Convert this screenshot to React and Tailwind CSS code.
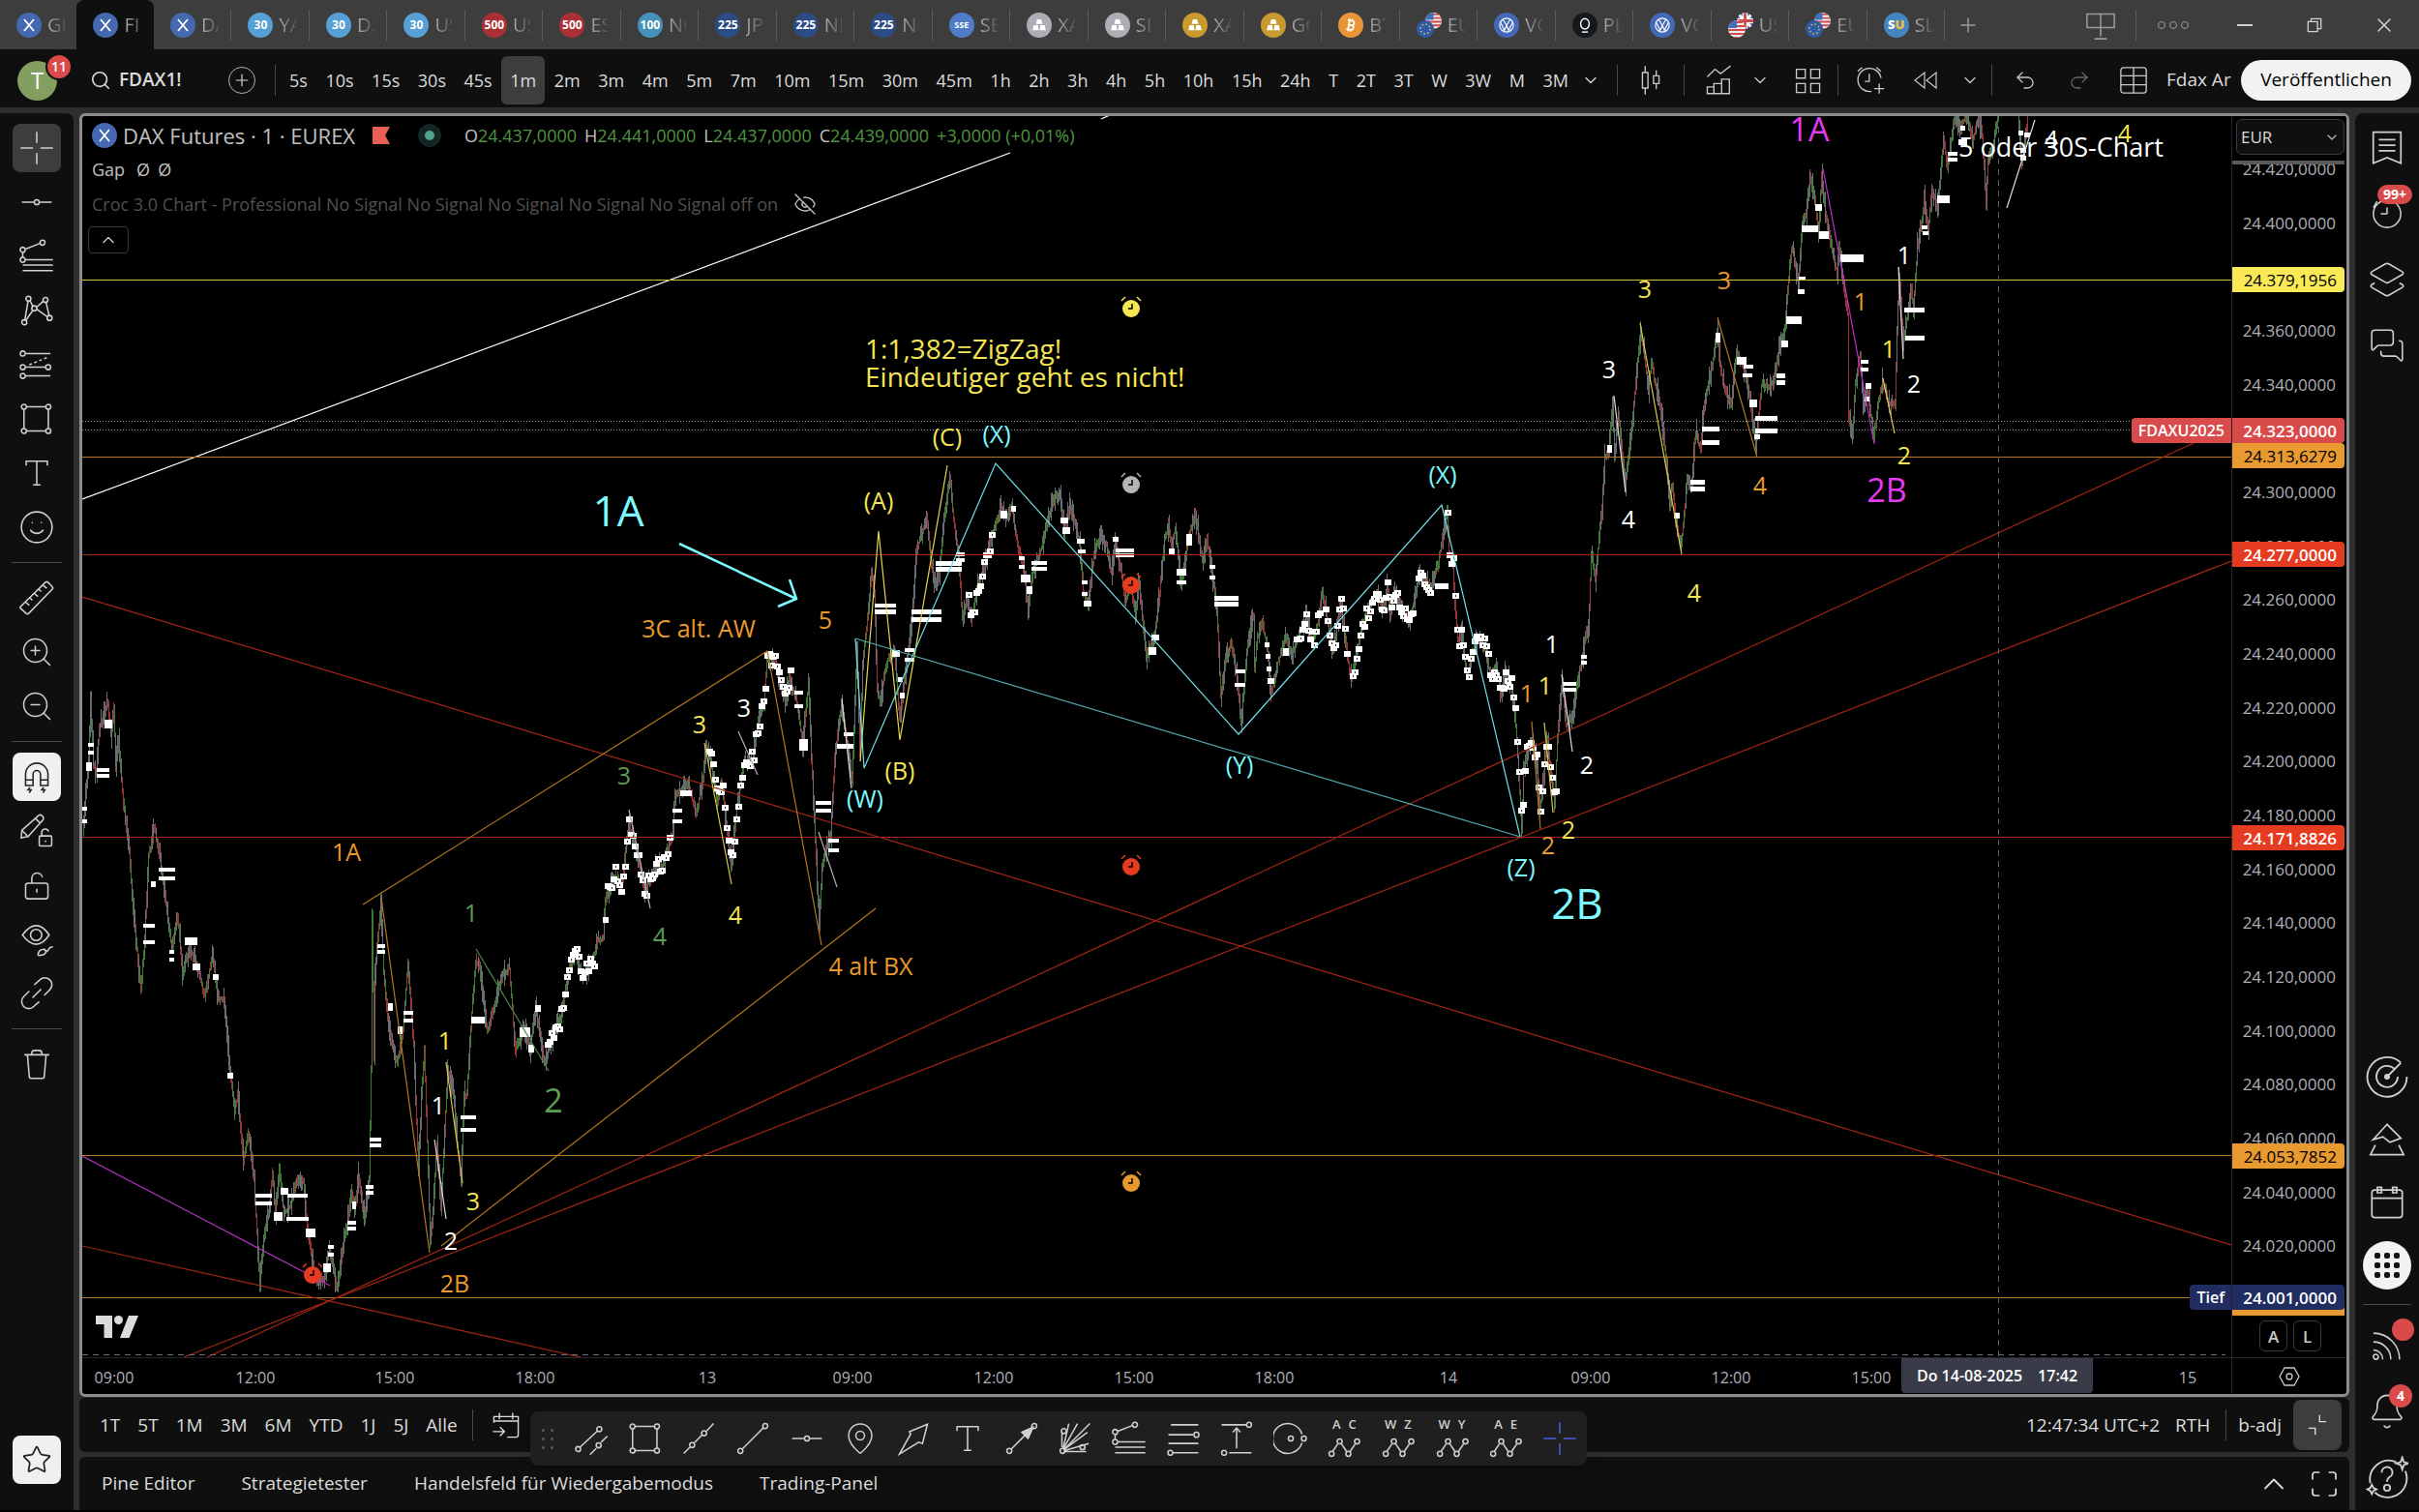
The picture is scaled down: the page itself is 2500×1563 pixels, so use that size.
import {
  Bitcoin, ChevronDown, ChevronUp, EyeOff, MapPin, Maximize, MessagesSquare, Plus, Search, Smile, Star, X,
  ZoomIn, ZoomOut, Layers2, Bell, Undo2, Redo2,
} from "lucide-react";

// Pixel window of the plot, all chart data below uses this space
const PLOT = { x: 85, y: 120, w: 2221, h: 1283 };
const left = (x) => `${((x - PLOT.x) / PLOT.w) * 100}%`;
const top = (y) => `${((y - PLOT.y) / PLOT.h) * 100}%`;

const C = {
  white: "#ffffff",
  yellow: "#f5e553",
  orange: "#e8992e",
  green: "#5a9e50",
  cyan: "#7df9ff",
  magenta: "#e33af0",
  red: "#e53b20",
};

const TABS = [
  ["eurex", "GI"], ["eurex", "FI"], ["eurex", "DA"], ["30", "YA"], ["30", "D."], ["30", "US"], ["500", "US"],
  ["500", "ES"], ["100", "NQ"], ["225", "JP"], ["225", "NI"], ["225", "NI"], ["sse", "SE"], ["silver", "XA"],
  ["silver", "SI"], ["gold", "XA"], ["gold", "GC"], ["btc", "BT"], ["eu", "EU"], ["vw", "VO"], ["pl", "PL"],
  ["vw", "VO"], ["gb", "US"], ["eu", "EU"], ["su", "SL"],
];

const TAB_COLORS = {
  eurex: "bg-[#4469b0]",
  30: "bg-[#55a0d4]",
  500: "bg-[#aa3035]",
  100: "bg-[#4592b8]",
  225: "bg-[#2d4b85]",
  sse: "bg-[#4f7cc9]",
  silver: "bg-[#adadb5]",
  gold: "bg-[#c99a2e]",
  btc: "bg-[#e79536]",
  vw: "bg-[#4469b8]",
  pl: "bg-[#15181c]",
  su: "bg-[#4585c0]",
};

const INTERVALS = [
  "5s", "10s", "15s", "30s", "45s", "1m", "2m", "3m", "4m", "5m", "7m", "10m", "15m", "30m", "45m", "1h", "2h",
  "3h", "4h", "5h", "10h", "15h", "24h", "T", "2T", "3T", "W", "3W", "M", "3M",
];

const RANGES = ["1T", "5T", "1M", "3M", "6M", "YTD", "1J", "5J", "Alle"];

const PRICE = [
  [86, 860], [92, 785], [94, 726], [97, 788], [100, 802], [103, 752], [112, 724], [115, 761], [118, 730], [120, 790],
  [123, 765], [128, 830], [134, 880], [138, 940], [146, 1025], [150, 970], [154, 885], [160, 855], [167, 895],
  [172, 935], [178, 980], [184, 945], [189, 1005], [196, 980], [205, 1000], [212, 1030], [220, 985], [225, 1030],
  [232, 1035], [238, 1105], [243, 1150], [246, 1130], [252, 1200], [257, 1170], [263, 1220], [269, 1328], [273, 1280],
  [279, 1245], [282, 1210], [285, 1255], [289, 1208], [294, 1255], [301, 1245], [307, 1220], [314, 1222], [318, 1270],
  [324, 1310], [328, 1322], [335, 1322], [341, 1290], [349, 1334], [353, 1300], [359, 1265], [364, 1230], [367, 1250],
  [371, 1215], [377, 1260], [382, 1220], [384, 1105], [385, 945], [387, 1095], [388, 1005], [394, 932], [397, 1005],
  [402, 1060], [411, 1100], [417, 1065], [422, 995], [428, 1080], [433, 1210], [436, 1130], [439, 1085], [442, 1180],
  [445, 1285], [448, 1250], [452, 1180], [456, 1250], [460, 1170], [463, 1108], [469, 1130], [473, 1180], [477, 1218],
  [480, 1130], [483, 1130], [487, 1060], [492, 992], [496, 1000], [504, 1065], [511, 1040], [518, 1010], [527, 1000],
  [533, 1085], [542, 1060], [548, 1085], [554, 1040], [563, 1098], [574, 1065], [580, 1050], [589, 1000], [596, 988],
  [603, 1010], [614, 990], [618, 970], [624, 970], [626, 930], [636, 905], [643, 915], [650, 850], [658, 880],
  [667, 920], [678, 895], [685, 895], [696, 860], [698, 822], [711, 808], [720, 842], [727, 803], [730, 772],
  [735, 787], [742, 829], [746, 806], [751, 852], [756, 895], [762, 833], [769, 787], [778, 784], [784, 745],
  [790, 730], [793, 678], [801, 684], [806, 703], [812, 726], [816, 698], [825, 730], [830, 770], [836, 705],
  [839, 784], [842, 845], [847, 958], [850, 898], [854, 879], [859, 864], [863, 784], [870, 728], [875, 764],
  [881, 806], [886, 668], [889, 780], [892, 688], [898, 627], [901, 592], [904, 611], [907, 711], [910, 724],
  [917, 684], [925, 673], [930, 742], [936, 695], [942, 650], [944, 623], [948, 565], [953, 554], [958, 535],
  [962, 573], [966, 605], [971, 592], [975, 546], [982, 490], [986, 539], [991, 573], [995, 640], [1000, 619],
  [1004, 640], [1011, 604], [1017, 588], [1024, 558], [1035, 525], [1040, 535], [1046, 522], [1052, 565],
  [1058, 585], [1063, 628], [1068, 588], [1075, 573], [1084, 535], [1089, 515], [1096, 512], [1100, 550],
  [1106, 523], [1116, 558], [1120, 611], [1125, 625], [1131, 573], [1137, 554], [1144, 565], [1149, 592],
  [1153, 560], [1159, 588], [1163, 622], [1169, 604], [1174, 638], [1177, 596], [1181, 638], [1185, 678],
  [1194, 657], [1199, 611], [1204, 558], [1208, 542], [1211, 569], [1215, 545], [1221, 605], [1229, 554],
  [1236, 532], [1243, 580], [1248, 558], [1254, 600], [1258, 627], [1262, 720], [1267, 680], [1273, 665],
  [1279, 700], [1283, 748], [1290, 663], [1296, 636], [1297, 690], [1300, 659], [1305, 641], [1310, 670],
  [1314, 718], [1321, 684], [1330, 656], [1335, 677], [1340, 663], [1350, 638], [1357, 663], [1363, 641],
  [1367, 610], [1372, 641], [1378, 674], [1386, 622], [1392, 670], [1397, 704], [1403, 670], [1407, 652],
  [1415, 627], [1422, 613], [1430, 627], [1434, 604], [1437, 636], [1442, 608], [1447, 624], [1456, 641],
  [1462, 624], [1467, 590], [1472, 599], [1480, 606], [1484, 588], [1487, 581], [1491, 556], [1496, 528],
  [1498, 570], [1502, 584], [1504, 624], [1507, 663], [1511, 649], [1514, 681], [1517, 699], [1522, 674],
  [1528, 659], [1535, 670], [1541, 699], [1547, 691], [1552, 718], [1555, 695], [1562, 706], [1567, 749],
  [1570, 799], [1573, 860], [1575, 795], [1579, 774], [1585, 768], [1589, 795], [1592, 838], [1596, 799],
  [1599, 762], [1603, 795], [1607, 832], [1610, 763], [1615, 704], [1619, 750], [1623, 741], [1626, 745],
  [1630, 709], [1636, 677], [1640, 649], [1642, 656], [1645, 570], [1649, 599], [1653, 556], [1656, 524],
  [1659, 470], [1663, 467], [1667, 416], [1669, 470], [1673, 428], [1680, 500], [1685, 460], [1690, 406],
  [1696, 342], [1699, 360], [1704, 403], [1707, 376], [1715, 413], [1720, 449], [1726, 521], [1729, 502],
  [1732, 538], [1738, 564], [1742, 521], [1744, 494], [1748, 506], [1753, 446], [1758, 465], [1761, 424],
  [1766, 396], [1771, 371], [1775, 342], [1778, 378], [1783, 403], [1790, 417], [1795, 364], [1802, 378],
  [1808, 406], [1815, 458], [1821, 399], [1833, 396], [1839, 360], [1845, 342], [1850, 271], [1853, 255],
  [1859, 294], [1863, 231], [1867, 221], [1871, 184], [1876, 206], [1880, 243], [1883, 180], [1888, 228],
  [1895, 264], [1899, 282], [1901, 253], [1906, 296], [1910, 324], [1911, 431], [1915, 450], [1918, 396],
  [1923, 364], [1926, 418], [1930, 403], [1937, 450], [1942, 414], [1946, 394], [1952, 414], [1959, 419],
  [1961, 342], [1963, 284], [1965, 310], [1967, 356], [1972, 324], [1976, 296], [1978, 322], [1982, 253],
  [1987, 228], [1989, 202], [1993, 240], [1997, 196], [2003, 214], [2007, 167], [2009, 142], [2013, 174],
  [2017, 146], [2020, 121], [2027, 131], [2033, 117], [2039, 146], [2045, 121], [2049, 139], [2053, 210],
  [2055, 164], [2059, 156], [2065, 121],
];
const PRICE_LAST = [[2086, 121], [2090, 170], [2096, 124]];

// Gap boxes: x, y, width, height
const GAPS = [
  [91, 768, 6, 4], [91, 776, 6, 4], [89, 788, 6, 9], [108, 744, 8, 9], [100, 794, 13, 4], [100, 800, 13, 4],
  [85, 834, 5, 4], [85, 847, 5, 4], [164, 897, 17, 4], [164, 906, 17, 4], [148, 955, 12, 4], [148, 972, 12, 4],
  [191, 969, 13, 8], [199, 996, 8, 7], [235, 1109, 6, 6], [220, 1007, 6, 6], [156, 911, 5, 6], [175, 982, 5, 4],
  [175, 990, 5, 4], [264, 1234, 17, 4], [264, 1242, 17, 4], [290, 1228, 8, 7], [283, 1253, 9, 9], [297, 1234, 21, 4],
  [296, 1258, 23, 4], [316, 1270, 10, 9], [334, 1306, 8, 9], [339, 1287, 6, 4], [339, 1295, 6, 4], [359, 1262, 9, 4],
  [359, 1268, 9, 4], [364, 1242, 4, 8], [378, 1225, 8, 4], [378, 1231, 8, 4], [382, 1176, 12, 4], [382, 1182, 12, 4],
  [390, 976, 8, 4], [390, 982, 8, 4], [401, 1037, 5, 8], [411, 1061, 5, 8], [417, 1045, 10, 4], [417, 1053, 10, 4],
  [476, 1153, 16, 4], [476, 1166, 16, 4], [487, 1051, 14, 7], [537, 1062, 11, 10], [546, 1080, 6, 8],
  [553, 1039, 6, 7], [623, 948, 6, 6], [695, 836, 10, 4], [695, 847, 10, 4], [703, 817, 12, 6], [821, 714, 9, 4],
  [821, 728, 9, 4], [826, 764, 9, 12], [843, 828, 16, 4], [843, 836, 16, 4], [856, 867, 11, 4], [856, 877, 11, 4],
  [865, 769, 17, 5], [872, 757, 10, 4], [904, 624, 22, 4], [904, 630, 22, 5], [942, 630, 31, 5], [942, 638, 31, 5],
  [935, 670, 10, 4], [935, 680, 10, 4], [922, 672, 8, 7], [928, 700, 5, 5], [930, 716, 5, 6], [967, 580, 27, 5],
  [967, 586, 27, 5], [988, 571, 9, 4], [988, 577, 9, 4], [1066, 580, 16, 4], [1066, 586, 16, 4], [1055, 594, 10, 8],
  [1061, 606, 6, 8], [1053, 575, 6, 4], [1053, 584, 6, 4], [1034, 528, 7, 8], [1045, 523, 5, 6], [1153, 567, 19, 4],
  [1153, 572, 19, 4], [1150, 555, 6, 5], [1113, 557, 8, 5], [1114, 568, 8, 4], [1096, 535, 8, 6], [1098, 545, 8, 7],
  [1216, 588, 10, 7], [1216, 600, 10, 4], [1226, 552, 6, 12], [1208, 567, 6, 6], [1250, 584, 6, 4],
  [1250, 595, 6, 4], [1255, 616, 25, 5], [1255, 622, 25, 5], [1277, 692, 10, 4], [1276, 706, 11, 4],
  [1187, 669, 8, 8], [1190, 656, 8, 6], [1118, 600, 6, 4], [1118, 612, 6, 4], [1120, 621, 8, 6], [1307, 664, 5, 5],
  [1308, 676, 5, 5], [1309, 689, 5, 5], [1310, 701, 7, 6], [1326, 670, 6, 8], [1483, 603, 14, 6], [1615, 705, 14, 4],
  [1615, 711, 14, 4], [1634, 677, 6, 4], [1634, 683, 6, 4], [1759, 441, 18, 5], [1759, 455, 18, 5],
  [1747, 496, 15, 5], [1747, 503, 15, 5], [1814, 430, 23, 5], [1814, 443, 23, 5], [1836, 386, 9, 5],
  [1836, 393, 9, 5], [1841, 352, 7, 7], [1846, 327, 16, 8], [1859, 286, 7, 4], [1858, 299, 7, 5], [1862, 233, 17, 7],
  [1876, 211, 7, 7], [1880, 239, 10, 8], [1902, 263, 24, 8], [1923, 372, 8, 4], [1923, 380, 8, 4], [1795, 369, 10, 8],
  [1802, 377, 10, 4], [1801, 386, 10, 4], [1808, 413, 8, 8], [1968, 318, 21, 5], [1969, 347, 20, 5],
  [1986, 233, 6, 4], [1987, 239, 6, 4], [2002, 202, 13, 8], [2013, 157, 10, 4], [2013, 163, 10, 4], [2024, 144, 9, 6],
  [2026, 130, 5, 5], [2086, 135, 5, 5], [2092, 137, 6, 5], [2088, 153, 6, 5], [2088, 161, 6, 5], [1773, 344, 5, 10],
  [1928, 396, 6, 6], [1927, 410, 5, 5], [1661, 460, 5, 8], [1730, 530, 6, 6], [1813, 449, 6, 5],
];

const GAP_RANGES = [
  [566, 616], [628, 694], [733, 818], [1001, 1026], [1340, 1366], [1370, 1394], [1398, 1462], [1466, 1480], [1496, 1609],
];

const LINES = [
  [C.white, 1, "85,516 1044,158"], [C.white, 1, "1138,123 1147,119"],
  ["#cdbf3c", 1, "85,289.5 2306,289.5"],
  ["#b5771f", 1, "85,472.5 2306,472.5"], ["#a32614", 1, "85,573.5 2306,573.5"], ["#a32614", 1, "85,865.5 2306,865.5"],
  ["#b5771f", 1, "85,1194.5 2306,1194.5"], ["#b5771f", 1, "85,1341.5 2306,1341.5"],
  ["#a32614", 1, "85,617 2306,1287"], ["#a32614", 1, "85,1288 600,1403"],
  ["#a32614", 1, "214,1403 2306,440"], ["#a32614", 1, "190,1403 2306,580"],
  ["#b02fc0", 1, "85,1195 341,1329"],
  ["#b5771f", 1, "375,935 793,673 849,977"], ["#b5771f", 1, "394,928 444,1295"], ["#b5771f", 1, "456,1288 905,939"],
  ["#4a8a40", 1, "492,981 567,1107"], ["#d9ca45", 1, "461,1098 478,1223"], ["#dddddd", 1, "449,1178 461,1260"],
  ["#b0b0b0", 1, "650,837 672,939"], ["#d9ca45", 1, "728,768 756,914"], ["#b0b0b0", 1, "763,756 783,801"],
  ["#b0b0b0", 1, "846,860 865,917"], ["#dddddd", 1, "870,722 880,815"],
  ["#e6d74e", 1, "889,787 908,549 930,765 979,481"],
  ["#6fe0e6", 1, "884,660 893,794 1029,479 1280,759 1490,522 1571,865"], ["#4fa9ad", 1, "884,660 1571,865"],
  ["#7df9ff", 2, "702,562 823,619"], ["#7df9ff", 2, "816,599 823,619 804,627"],
  ["#b5771f", 1, "1583,746 1592,857"], ["#d9ca45", 1, "1596,747 1605,840"], ["#dddddd", 1, "1614,697 1625,777"],
  ["#dddddd", 1, "1668,409 1680,509"], ["#d9ca45", 1, "1695,334 1738,573"], ["#b5771f", 1, "1775,328 1816,473"],
  ["#c02fd0", 1, "1884,174 1937,459"], ["#e6d74e", 1, "1946,391 1958,448"], ["#dddddd", 1, "1962,276 1967,371"],
  ["#dddddd", 1, "2103,124 2074,215"],
];

const NOTES = [
  [358, 880, "1A", C.orange], [645, 801, "3", C.green], [487, 943, "1", C.green], [682, 967, "4", C.green],
  [572, 1137, "2", C.green, "md"], [460, 1075, "1", C.yellow], [453, 1142, "1", C.white], [489, 1241, "3", C.yellow],
  [466, 1282, "2", C.white], [470, 1326, "2B", C.orange], [639, 527, "1A", C.cyan, "lg"],
  [722, 649, "3C alt. AW", C.orange], [853, 640, "5", C.orange], [908, 517, "(A)", C.yellow],
  [979, 451, "(C)", C.yellow], [1030, 448, "(X)", C.cyan], [930, 796, "(B)", C.yellow], [894, 825, "(W)", C.cyan],
  [1281, 790, "(Y)", C.cyan], [723, 748, "3", C.yellow], [769, 731, "3", C.white], [760, 945, "4", C.yellow],
  [900, 998, "4 alt BX", C.orange], [1491, 490, "(X)", C.cyan], [1572, 896, "(Z)", C.cyan],
  [1630, 933, "2B", C.cyan, "lg"], [1578, 716, "1", C.orange], [1597, 708, "1", C.yellow], [1604, 665, "1", C.white],
  [1640, 790, "2", C.white], [1621, 857, "2", C.yellow], [1600, 873, "2", C.orange], [1683, 536, "4", C.white],
  [1751, 612, "4", C.yellow], [1819, 501, "4", C.orange], [1870, 133, "1A", C.magenta, "md"],
  [1950, 506, "2B", C.magenta, "md"], [1782, 289, "3", C.orange], [1700, 298, "3", C.yellow],
  [1663, 381, "3", C.white], [1923, 311, "1", C.orange], [1952, 360, "1", C.yellow], [1968, 263, "1", C.white],
  [1978, 396, "2", C.white], [1968, 470, "2", C.yellow], [2120, 143, "4", C.white], [2196, 137, "4", C.yellow],
  [2130, 151, "5 oder 30S-Chart", C.white, "note"],
];

const NOTE_SIZES = {
  sm: "text-[25px] font-medium",
  note: "text-[27px] font-medium",
  md: "text-[34px]",
  lg: "text-[44px]",
};

const ALARMS = [
  [1169, 318, C.yellow], [1169, 500, "#b5b5b5"], [1169, 604, C.red], [1169, 895, C.red], [1169, 1222, C.orange],
  [323, 1317, C.red],
];

const TIMES = [
  [118, "09:00"], [264, "12:00"], [408, "15:00"], [553, "18:00"], [731, "13"], [881, "09:00"], [1027, "12:00"],
  [1172, "15:00"], [1317, "18:00"], [1497, "14"], [1644, "09:00"], [1789, "12:00"], [1934, "15:00"], [2261, "15"],
];

const SCALE = Array.from({ length: 21 }, (_, i) => 24420 - i * 20).filter((p) => p !== 24380 && p !== 24320);
const priceY = (p) => 230 + (24400 - p) * 2.782;

const TAGS = [
  [289, "24.379,1956", "bg-[#f9ea55] text-black"],
  [471, "24.313,6279", "bg-[#e89a30] text-black"],
  [445, "24.323,0000", "bg-[#d94a4a] text-white font-semibold"],
  [573, "24.277,0000", "bg-[#e53b20] text-white font-semibold"],
  [866, "24.171,8826", "bg-[#e53b20] text-white font-semibold"],
  [1195, "24.053,7852", "bg-[#e89a30] text-black"],
];

// Small deterministic generator so the bars look the same on every render
function rng(seed) {
  let s = seed;
  return () => {
    s = (s * 16807) % 2147483647;
    return s / 2147483647;
  };
}

function buildBars(points, seed) {
  const rand = rng(seed);
  let wick = "";
  let up = "";
  let down = "";
  for (let i = 0; i < points.length - 1; i++) {
    const [x0, y0] = points[i];
    const [x1, y1] = points[i + 1];
    for (let x = x0; x < x1; x++) {
      const a = y0 + ((y1 - y0) * (x - x0)) / (x1 - x0);
      const b = y0 + ((y1 - y0) * (x + 1 - x0)) / (x1 - x0);
      const lo = Math.min(a, b);
      const hi = Math.max(a, b);
      if (rand() > 0.55) {
        wick += `M${x + 0.5} ${Math.round(lo - rand() * 14)}V${Math.round(hi + rand() * 14)}`;
      }
      const rising = rand() > 0.3 ? b < a : b >= a;
      const body = `M${x + 0.5} ${Math.round(lo - rand() * 7)}V${Math.round(hi + 1 + rand() * 7)}`;
      if (rising) up += body;
      else down += body;
    }
  }
  return { wick, up, down };
}

function priceAt(x) {
  const i = Math.max(0, PRICE.findIndex((p) => p[0] > x) - 1);
  const [x0, y0] = PRICE[i];
  const [x1, y1] = PRICE[i + 1];
  return y0 + ((y1 - y0) * (x - x0)) / (x1 - x0);
}

function buildSquares() {
  const rand = rng(77);
  const out = [];
  GAP_RANGES.forEach(([from, to]) => {
    for (let x = from; x < to; x += 2) {
      out.push([x - 3, Math.round(priceAt(x) - 3 + (rand() - 0.5) * 18), rand() > 0.4]);
    }
  });
  return out;
}

const BARS = [buildBars(PRICE, 4711), buildBars(PRICE_LAST, 99)];
const SQUARES = buildSquares();

// Line icons in a 28 unit box, dots are the little round handles
const ICONS = {
  cross: ["M14 1v9M14 18v9M1 14h10M17 14h10"],
  hline: ["M2 14h9.5M16.5 14H26", [[14, 14]]],
  fib: ["M4.8 8.2L16.5 3.6M2.7 10.7v4M4.8 16.8H27M2.7 21H27M2.7 25.5H27", [[2.7, 8.7], [2.7, 16.8], [18.6, 3]]],
  pattern: [
    "M4.4 21.5L7 6.5M8.6 6l2.2 4.5M14 11.3l5-4.6M14 13l8.4 6M21.5 7.5l2.4 10.5M10.8 14L5.3 21.8",
    [[7.3, 4.5], [21, 5.5], [12, 12.2], [4, 23.5], [24.3, 20]],
  ],
  position: ["M5 5h20M5 16h16M5 23h20M8 14l2-.8M12 12.4l2-.8M16 10.8l2-.8M20 9.2l2-.8", [[2.8, 5], [2.8, 16], [23.2, 16], [2.8, 23]]],
  rect: ["M6 4.3h15M6 23.7h15M3.7 6.5v15M23.3 6.5v15", [[3.7, 4.3], [23.3, 4.3], [3.7, 23.7], [23.3, 23.7]]],
  text: ["M5.5 8V4.5h17V8M14 4.5v19M11 23.5h6"],
  ruler: ["M1 21L21 1.5q1-.8 2 0l3.500 3.500q.8 1 0 2L7.500 26.500q-1 .8-2 0L1 22.500q-.6-.8 0-1.500M5 17.500l3 2.500M8.500 14l2 2M12 10.500l3 2.500M15.500 7l2 2M19 3.800l3 2.500"],
  magnet: ["M5 21v-9a9 9 0 0 1 18 0v9h-6v-9a3 3 0 0 0-6 0v9zM5 16.500h6M17 16.500h6M8.500 22.500l-1.500 2h2.500l-1.500 2.500M19.500 22.500l-1.500 2h2.500l-1.500 2.500"],
  penlock: ["M2 13.500L15.500 1.500q1.500-1 3 .5t.5 3L7 18.500l-5.500 1zM13 4l4 4M2.500 14l4 4M17 18h8a1 1 0 0 1 1 1v6a1 1 0 0 1-1 1h-8a1 1 0 0 1-1-1v-6a1 1 0 0 1 1-1M18 18v-3a2.800 2.800 0 0 1 5.500-.5M21 21.500v1.500"],
  lock: ["M7 12.500h14a2 2 0 0 1 2 2v8.500a2 2 0 0 1-2 2H7a2 2 0 0 1-2-2v-8.500a2 2 0 0 1 2-2M10 12.500V8.500a4.300 4.300 0 0 1 8.500-.8M14 17v3"],
  eye: ["M2.500 10.500Q8 3 13.500 3T24 10.500Q19 18 13.500 18T2.500 10.500zM15 27q0-5 5-5 2 1 1 3t-6 2M21.500 24q1 0 2-2t3.500-2"],
  link: ["M12 7l4.500-4a5.500 5.500 0 0 1 8 8L20 15.500M8 12l-4.500 4.500a5.500 5.500 0 0 0 8 8L16 20.500M10.500 17.500l7-7"],
  trash: ["M4 6.500h20M6.500 6.500l1.500 17.500a1.500 1.500 0 0 0 1.500 1.500h9a1.500 1.500 0 0 0 1.500-1.500l1.500-17.500M10 6.500V5a2 2 0 0 1 2-2h4a2 2 0 0 1 2 2v1.500"],
  channel: ["M5 21L19 8M13 27l5-5M22 17l5-5", [[3.5, 22.5], [20.5, 6.5], [20, 19.5]]],
  info: ["M2 26l5-5M10.5 17.5l6-6M20.5 8L26 2", [[8.8, 19.3], [18.4, 9.8]]],
  trend: ["M5.5 22.5l17-17", [[4, 24], [24, 4]]],
  arrow: ["M2 26.500l9-16-1-2L24.500 2.500l-4 15.500-3-1z"],
  arrowline: ["M5.5 22.5L18 10M22.5 5.5L14.5 9l4.5 4.5z", [[4, 24], [24, 4]]],
  fan: ["M5 23L26 2M4.5 22L9 2M3.5 21V9M5 23l19-14M5 24l20-6M5 24.5h18M4.8 22L16 2", [[4, 24], [20, 21], [5, 8]]],
  fibtime: ["M4 3h22M2 11h20M2 18h24M5.5 25.5H26", [[3.5, 25.5], [24.5, 11]]],
  measure: ["M2 3h20M8 25.5h18M14 6v16M11 9l3-3.5L17 9", [[24, 3], [4, 25.5]]],
  circle: ["M23 10.5A12 12 0 1 0 23 17.5", [[14, 14], [24.5, 14]]],
  zig: ["M5 22l4-6M12 16l4 6M19 22l4-6", [[4, 24], [10.5, 14], [17.5, 24], [24.5, 14]]],
  candles: ["M9 1v6M9 21v6M6.500 7h5v14h-5zM19 5v5M19 17v5M16.500 10h5v7h-5z"],
  indicators: ["M3 11l7-7 5 4 9-7M3 26v-6h6v6zM9 26v-9h7v9M16 26V13h7v13H3"],
  tiles: ["M4 4h8v8H4zM17 4h8v8h-8zM4 17h8v8H4zM17 17h8v8h-8z"],
  alert: ["M23.6 12A10.5 10.5 0 1 0 15 24M13 8v7H9M2.5 6l4-3.5M19.5 2.5l4 3.5M22 17v9M17.5 21.5h9"],
  replay: ["M13 6v16L3 14zM25 6v16L15 14z"],
  layout: ["M5 2.5h18A2.500 2.500 0 0 1 25.500 5v18A2.500 2.500 0 0 1 23 25.500H5A2.500 2.500 0 0 1 2.500 23V5A2.500 2.500 0 0 1 5 2.500zM2.500 10h23M2.500 18h23M14 2.500v23"],
  goto: ["M3 12V6.500h22V23a2 2 0 0 1-2 2h-8M3 10.500h22M8 3v6M20 3v6M2 20h10M8.500 16l4 4-4 4"],
  list: ["M4 2.500h20V25l-10-4-10 4zM8 8h12M8 12h12M8 16h12"],
  clock: ["M14 14V9M14 14h-5M3 9l3-5M25 14a11 11 0 1 1-22 0 11 11 0 0 1 22 0"],
  radar: ["M27 14a13 13 0 1 1-4-9.200M21 14a7 7 0 1 1-2-5M14 14l9-9"],
  cone: ["M14 3L4 14l7-2 5 4 8-3zM5.500 18L2 25h24l-3.500-7"],
  calendar: ["M5 5h18a2 2 0 0 1 2 2v16a2 2 0 0 1-2 2H5a2 2 0 0 1-2-2V7a2 2 0 0 1 2-2zM3 11h22M7 3h3v4H7zM18 3h3v4h-3z"],
  feed: ["M3 4a21 21 0 0 1 21 21M3 11a14 14 0 0 1 14 14M3 17.500a7.500 7.500 0 0 1 7.500 7.500", [[5, 23]]],
  help: ["M20 4A12.500 12.500 0 0 0 3 18M6 24a12.500 12.500 0 0 0 20-14M10.500 11a3.500 3.500 0 1 1 5 3c-1 .600-1.500 1.200-1.500 3M24 1l1 3 3 1-3 1-1 3-1-3-3-1 3-1zM4 19l1 2 2 1-2 1-1 2-1-2-2-1 2-1z", [[14, 21]]],
  corners: ["M16 5v6h6M6 17h6v6"],
  monitor: ["M3 5h22v11H3zM14 5v18M9 25h10"],
};

function Icon({ name, className = "size-9" }) {
  const [d, dots = []] = ICONS[name];
  return (
    <svg viewBox="0 0 28 28" className={className} fill="none" stroke="currentColor" strokeWidth="1.2">
      <path d={d} />
      {dots.map(([cx, cy]) => (
        <circle key={`${cx}-${cy}`} cx={cx} cy={cy} r="2" />
      ))}
      {name === "arrowline" && <path d="M23 5L14 9l5 5z" fill="currentColor" />}
      {name === "eye" && <circle cx="13.500" cy="10.500" r="4.500" />}
    </svg>
  );
}

function Flag({ kind, className }) {
  return (
    <svg viewBox="0 0 18 18" className={className}>
      <clipPath id={`flag-${kind}`}>
        <circle cx="9" cy="9" r="9" />
      </clipPath>
      <g clipPath={`url(#flag-${kind})`}>
        {kind === "us" && (
          <>
            <path fill="#eee" d="M0 0h18v18H0z" />
            <path stroke="#d04a4a" strokeWidth="2" d="M0 2h18M0 6h18M0 10h18M0 14h18M0 18h18" />
            <path fill="#3f6fc0" d="M0 0h9v8H0z" />
          </>
        )}
        {kind === "gb" && (
          <>
            <path fill="#3355a0" d="M0 0h18v18H0z" />
            <path stroke="#fff" strokeWidth="3" d="M0 0l18 18M18 0L0 18" />
            <path stroke="#fff" strokeWidth="6" d="M9 0v18M0 9h18" />
            <path stroke="#d04a4a" strokeWidth="3" d="M9 0v18M0 9h18" />
          </>
        )}
        {kind === "eu" && (
          <>
            <path fill="#2f5aa8" d="M0 0h18v18H0z" />
            <circle cx="9" cy="9" r="5" fill="none" stroke="#e8c640" strokeWidth="1.5" strokeDasharray="1.500 2.400" />
          </>
        )}
      </g>
    </svg>
  );
}

function EurexMark({ className }) {
  return (
    <svg viewBox="0 0 26 26" className={className}>
      <circle cx="13" cy="13" r="13" fill="#4469b0" />
      <path d="M8 7l10 12M18 7L8 19" stroke="#fff" strokeWidth="1.800" fill="none" />
    </svg>
  );
}

function TabLogo({ kind }) {
  if (kind === "eurex") return <EurexMark className="size-[26px] shrink-0" />;
  if (kind === "eu" || kind === "gb") {
    return (
      <span className="relative block size-[26px] shrink-0">
        <Flag kind={kind === "eu" ? "us" : "gb"} className="absolute right-0 top-0 size-[17px]" />
        <Flag kind={kind === "eu" ? "eu" : "us"} className="absolute bottom-0 left-0 size-[18px]" />
      </span>
    );
  }
  return (
    <span className={`flex size-[26px] shrink-0 items-center justify-center rounded-full text-white ${TAB_COLORS[kind]}`}>
      {(kind === "silver" || kind === "gold") && (
        <svg viewBox="0 0 18 14" className="h-3 w-4" fill="#fff">
          <path d="M6.500 0h5l1.500 5.500H5zM2.500 7h5l1 6H1zM10.500 7h5L17 13H9.500z" />
        </svg>
      )}
      {kind === "btc" && <Bitcoin className="size-4" strokeWidth={2.5} />}
      {kind === "vw" && (
        <svg viewBox="0 0 18 18" className="size-4" fill="none" stroke="#fff" strokeWidth="1.300">
          <circle cx="9" cy="9" r="8" />
          <path d="M5 2.500l4 7 4-7M2 6l4.500 9L9 9.500 11.500 15 16 6" />
        </svg>
      )}
      {kind === "pl" && (
        <svg viewBox="0 0 18 18" className="size-4" fill="none" stroke="#fff" strokeWidth="1.600">
          <ellipse cx="9" cy="7.500" rx="5" ry="6" />
          <path d="M5.500 17h7" />
        </svg>
      )}
      {kind === "su" && <span className="text-[13px] font-extrabold">S<span className="text-[#f0c040]">U</span></span>}
      {kind === "sse" && <span className="text-[9px] font-bold">SSE</span>}
      {/^\d+$/.test(kind) && <span className="text-[12px] font-bold leading-none">{kind}</span>}
    </span>
  );
}

function TabBar() {
  return (
    <header className="flex h-[51px] shrink-0 items-center bg-[#3d3d3d] text-[#9a9a9a]">
      <nav className="flex h-full w-[80.4%] items-center">
        {TABS.map(([kind, label], i) => (
          <a
            key={i}
            href="#chart"
            className={`flex min-w-0 flex-1 items-center pl-[17px] ${
              i === 1 ? "h-full rounded-t-lg bg-[#0f0f0f]" : "h-8"
            } ${i > 1 ? "border-r border-[#5c5c5c]" : ""}`}
          >
            <TabLogo kind={kind} />
            <span className="ml-1.5 w-[18px] overflow-hidden bg-gradient-to-r from-[#b0b0b0] to-[#505050] bg-clip-text text-xl text-transparent">
              {label}
            </span>
          </a>
        ))}
      </nav>
      <button aria-label="Neuer Tab" className="ml-3"><Plus className="size-6" strokeWidth={1.500} /></button>
      <div className="ml-auto flex h-full items-center">
        <button aria-label="Monitor" className="flex w-[72px] justify-center"><Icon name="monitor" /></button>
        <span className="h-8 w-px bg-[#5c5c5c]" />
        <button aria-label="Mehr" className="flex w-[76px] justify-center gap-1">
          <span className="size-2 rounded-full border border-[#9a9a9a]" />
          <span className="size-2 rounded-full border border-[#9a9a9a]" />
          <span className="size-2 rounded-full border border-[#9a9a9a]" />
        </button>
        <button aria-label="Minimieren" className="flex w-[72px] justify-center"><span className="h-0.5 w-4 bg-[#d0d0d0]" /></button>
        <button aria-label="Verkleinern" className="flex w-[72px] justify-center">
          <svg viewBox="0 0 18 18" className="size-4" fill="none" stroke="#d0d0d0" strokeWidth="1.500">
            <path d="M1.500 5h11v11.500h-11zM5 5V1.500h11.500V13H13" />
          </svg>
        </button>
        <button aria-label="Schließen" className="flex w-[72px] justify-center text-[#d0d0d0]"><X className="size-6" strokeWidth={1.500} /></button>
      </div>
    </header>
  );
}

function Divider() {
  return <span className="h-8 w-px shrink-0 bg-[#4a4a4a]" />;
}

function TopToolbar() {
  return (
    <div className="flex h-[60px] shrink-0 items-center overflow-hidden bg-[#0f0f0f] pt-1 text-lg font-medium text-[#dbdbdb]">
      <button aria-label="Konto" className="relative ml-[18px] size-[41px] shrink-0 rounded-full bg-[#839f5f] text-2xl text-white">
        T
        <span className="absolute -right-4 -top-2 flex size-7 items-center justify-center rounded-full border-2 border-[#0f0f0f] bg-[#d94a4a] text-sm font-semibold">
          11
        </span>
      </button>
      <button className="ml-[34px] flex w-[138px] shrink-0 items-center gap-2 text-[19px] font-semibold">
        <Search className="size-[22px]" strokeWidth={1.800} />
        FDAX1!
      </button>
      <button aria-label="Vergleichen" className="ml-[5px] flex size-7 shrink-0 items-center justify-center rounded-full border border-[#b0b0b0]">
        <Plus className="size-5" strokeWidth={1.400} />
      </button>
      <span className="ml-5 flex"><Divider /></span>
      <div className="ml-[5px] flex w-[53.6%] items-center justify-between">
        {INTERVALS.map((t) => (
          <button key={t} className={`h-[50px] rounded-md px-[9px] ${t === "1m" ? "bg-[#3d3d3d]" : ""}`}>
            {t}
          </button>
        ))}
      </div>
      <button aria-label="Intervalle" className="pl-1"><ChevronDown className="size-5" strokeWidth={1.500} /></button>
      <div className="ml-auto flex shrink-0 items-center text-[#c8c8c8]">
        <Divider />
        <button aria-label="Kerzen" className="flex w-[68px] justify-center"><Icon name="candles" className="size-8" /></button>
        <Divider />
        <button aria-label="Indikatoren" className="ml-3 flex w-12 justify-center"><Icon name="indicators" className="size-8" /></button>
        <button aria-label="Favoriten" className="flex w-9 justify-center"><ChevronDown className="size-5" strokeWidth={1.500} /></button>
        <button aria-label="Vorlagen" className="flex w-[62px] justify-center"><Icon name="tiles" className="size-8" /></button>
        <Divider />
        <button aria-label="Alarm" className="flex w-[66px] justify-center"><Icon name="alert" className="size-8" /></button>
        <button aria-label="Wiedergabe" className="flex w-12 justify-center"><Icon name="replay" className="size-7" /></button>
        <button aria-label="Wiedergabe Optionen" className="flex w-11 justify-center"><ChevronDown className="size-5" strokeWidth={1.500} /></button>
        <Divider />
        <button aria-label="Rückgängig" className="ml-1.5 flex w-14 justify-center"><Undo2 className="size-6" strokeWidth={1.300} /></button>
        <button aria-label="Wiederholen" className="flex w-14 justify-center text-[#666]"><Redo2 className="size-6" strokeWidth={1.300} /></button>
        <button aria-label="Layout" className="flex w-14 justify-center"><Icon name="layout" className="size-8" /></button>
        <button className="ml-1.5 w-[77px] overflow-hidden whitespace-nowrap text-left text-[19px] text-[#dbdbdb]">Fdax Ar</button>
        <button className="mr-2 h-[42px] w-44 rounded-full bg-[#f2f2f2] text-[19px] text-black">Veröffentlichen</button>
      </div>
    </div>
  );
}

function Tool({ label, active, children }) {
  return (
    <button aria-label={label} className="flex h-14 w-full shrink-0 items-center justify-center">
      <span
        className={`flex size-[50px] items-center justify-center rounded-lg ${
          active === "light" ? "bg-[#f0f0f0] text-[#222]" : active ? "bg-[#3d3d3d]" : ""
        }`}
      >
        {children}
      </span>
    </button>
  );
}

function DrawingBar() {
  return (
    <aside className="flex w-[76px] shrink-0 flex-col rounded-tr-lg bg-[#0f0f0f] pt-2 text-[#cfcfcf]">
      <Tool label="Fadenkreuz" active><Icon name="cross" /></Tool>
      <Tool label="Linien"><Icon name="hline" /></Tool>
      <Tool label="Fibonacci"><Icon name="fib" /></Tool>
      <Tool label="Muster"><Icon name="pattern" /></Tool>
      <Tool label="Prognose"><Icon name="position" /></Tool>
      <Tool label="Formen"><Icon name="rect" /></Tool>
      <Tool label="Text"><Icon name="text" /></Tool>
      <Tool label="Symbole"><Smile className="size-[38px]" strokeWidth={1} /></Tool>
      <span className="mx-3 my-2 h-px shrink-0 bg-[#4a4a4a]" />
      <Tool label="Messen"><Icon name="ruler" /></Tool>
      <Tool label="Vergrößern"><ZoomIn className="size-9" strokeWidth={1} /></Tool>
      <Tool label="Verkleinern"><ZoomOut className="size-9" strokeWidth={1} /></Tool>
      <span className="mx-3 my-2 h-px shrink-0 bg-[#4a4a4a]" />
      <Tool label="Magnet" active="light"><Icon name="magnet" /></Tool>
      <Tool label="Zeichenmodus"><Icon name="penlock" /></Tool>
      <Tool label="Sperren"><Icon name="lock" /></Tool>
      <Tool label="Ausblenden"><Icon name="eye" /></Tool>
      <Tool label="Verknüpfen"><Icon name="link" /></Tool>
      <span className="mx-3 my-2 h-px shrink-0 bg-[#4a4a4a]" />
      <Tool label="Löschen"><Icon name="trash" /></Tool>
      <span className="mt-auto pb-6"><Tool label="Favoriten" active="light"><Star className="size-8" strokeWidth={1.300} /></Tool></span>
    </aside>
  );
}

function SideButton({ label, tall = true, children }) {
  return (
    <button aria-label={label} className={`flex w-full items-center justify-center ${tall ? "h-[68px]" : "h-[65px]"}`}>
      <span className="relative">{children}</span>
    </button>
  );
}

function WidgetBar() {
  return (
    <aside className="flex w-[66px] shrink-0 flex-col rounded-tl-lg bg-[#0f0f0f] pt-0.5 text-[#cfcfcf]">
      <SideButton label="Watchlist"><Icon name="list" className="size-10" /></SideButton>
      <SideButton label="Alarme">
        <Icon name="clock" />
        <span className="absolute -right-2 -top-3 rounded-full bg-[#d94a4a] px-1.5 text-sm font-bold text-white">99+</span>
      </SideButton>
      <SideButton label="Ebenen"><Layers2 className="size-10" strokeWidth={1} /></SideButton>
      <SideButton label="Chats"><MessagesSquare className="size-[38px] -scale-x-100 -scale-y-100 rotate-180" strokeWidth={1} /></SideButton>
      <span className="mt-auto" />
      <SideButton label="Screener" tall={false}>
        <Icon name="radar" className="size-11" />
        <span className="absolute left-[19px] top-[19px] size-1.5 rounded-full bg-[#cfcfcf]" />
      </SideButton>
      <SideButton label="Optionen" tall={false}><Icon name="cone" className="size-10" /></SideButton>
      <SideButton label="Kalender" tall={false}><Icon name="calendar" className="size-10" /></SideButton>
      <SideButton label="Apps" tall={false}>
        <span className="grid size-[50px] grid-cols-[auto_auto_auto] place-content-center gap-1 rounded-full bg-[#f2f2f2]">
          {Array.from({ length: 9 }, (_, i) => (
            <span key={i} className="size-1.5 rounded-[2px] bg-[#111]" />
          ))}
        </span>
      </SideButton>
      <span className="mx-2 my-2 h-px bg-[#4a4a4a]" />
      <SideButton label="Streams">
        <Icon name="feed" />
        <span className="absolute -right-2.5 -top-2.5 size-[23px] rounded-full bg-[#d94a4a]" />
      </SideButton>
      <SideButton label="Mitteilungen">
        <Bell className="size-10" strokeWidth={1} />
        <span className="absolute -right-1.5 -top-2 flex size-6 items-center justify-center rounded-full bg-[#d94a4a] text-sm font-bold text-white">4</span>
      </SideButton>
      <SideButton label="Hilfe"><Icon name="help" className="size-11" /></SideButton>
    </aside>
  );
}

function Alarm({ x, y, color }) {
  return (
    <svg
      viewBox="0 0 22 24"
      className="absolute h-6 w-[22px] -translate-x-1/2 -translate-y-1/2"
      style={{ left: left(x), top: top(y) }}
    >
      <circle cx="11" cy="13" r="9" fill={color} />
      <path d="M1 5l4-4M21 5l-4-4" stroke={color} strokeWidth="1.500" />
      <path d="M12 8v5H8" fill="none" stroke="#000" strokeWidth="1.500" />
    </svg>
  );
}

function Plot() {
  return (
    <div className="relative min-w-0 flex-1 overflow-hidden">
      <svg
        viewBox={`${PLOT.x} ${PLOT.y} ${PLOT.w} ${PLOT.h}`}
        preserveAspectRatio="none"
        className="absolute inset-0 size-full"
        fill="none"
      >
        <path d="M85 435.500H2306M85 444.500H2306" stroke="#a0a0a0" strokeDasharray="1 2" />
        {BARS.map((b, i) => (
          <g key={i}>
            <path d={b.up} stroke="#3f7a35" />
            <path d={b.down} stroke="#943539" />
            <path d={b.wick} stroke="#6a6c74" />
          </g>
        ))}
        {GAPS.map(([x, y, w, h], i) => (
          <rect key={i} x={x} y={y} width={w} height={h} fill="#fff" />
        ))}
        {SQUARES.map(([x, y, hole], i) => (
          <g key={i}>
            <rect x={x} y={y} width="7" height="6" fill="#fff" />
            {hole && <rect x={x + 3} y={y + 2} width="1" height="2" fill="#333" />}
          </g>
        ))}
        {LINES.map(([stroke, width, points], i) => (
          <polyline key={i} points={points} stroke={stroke} strokeWidth={width === 1 ? 1.2 : 2.5} />
        ))}
        <path d="M2065.500 120V1403" stroke="#5d606b" strokeDasharray="6 5" />
        <path d="M85 1400.500H2300" stroke="#6a6d80" strokeDasharray="6 5" />
      </svg>
      {NOTES.map(([x, y, text, color, size = "sm"], i) => (
        <span
          key={i}
          className={`absolute -translate-x-1/2 -translate-y-1/2 whitespace-nowrap leading-none ${NOTE_SIZES[size]}`}
          style={{ left: left(x), top: top(y), color }}
        >
          {text}
        </span>
      ))}
      <p
        className="absolute whitespace-nowrap text-[28px] font-medium leading-[29px] text-[#f5e553]"
        style={{ left: left(894), top: top(346) }}
      >
        1:1,382=ZigZag!
        <br />
        Eindeutiger geht es nicht!
      </p>
      {ALARMS.map(([x, y, color]) => (
        <Alarm key={`${x}-${y}`} x={x} y={y} color={color} />
      ))}
      <span
        className="absolute right-0 flex h-[26px] -translate-y-1/2 items-center rounded-l-sm bg-[#d94a4a] px-[7px] text-base font-semibold text-white"
        style={{ top: top(445) }}
      >
        FDAXU2025
      </span>
      <span
        className="absolute right-0 flex h-[26px] -translate-y-1/2 items-center rounded-l-sm bg-[#212d60] px-[7px] text-base font-semibold text-white"
        style={{ top: top(1341) }}
      >
        Tief
      </span>
      <Legend />
      <svg viewBox="0 0 44 23" className="absolute bottom-5 left-3.5 h-[23px] w-11" fill="#dbdbdb">
        <path d="M0 0h17v23H8.500V9H0zM34 0h10l-9.500 23H25z" />
        <circle cx="23.500" cy="4.500" r="4.500" />
      </svg>
    </div>
  );
}

function Ohlc({ label, value }) {
  return (
    <span>
      <span className="text-[#c0c0c0]">{label}</span>
      {value}
    </span>
  );
}

function Legend() {
  return (
    <div className="absolute left-2.5 top-[5px] flex flex-col text-lg font-medium text-[#c0c0c0]">
      <div className="flex h-[30px] items-center">
        <EurexMark className="size-[26px]" />
        <h1 className="ml-1.5 w-[258px] whitespace-nowrap text-[22px]">DAX Futures · 1 · EUREX</h1>
        <svg viewBox="0 0 18 18" className="size-[18px]" fill="#e95f55">
          <path d="M0 0h18l-5 9 5 9H0z" />
        </svg>
        <span className="ml-[29px] flex size-6 items-center justify-center rounded-full bg-[#142624]">
          <span className="size-2.5 rounded-full bg-[#4fa58c]" />
        </span>
        <p className="ml-6 flex gap-2 whitespace-nowrap text-[#4f9440]">
          <Ohlc label="O" value="24.437,0000" />
          <Ohlc label="H" value="24.441,0000" />
          <Ohlc label="L" value="24.437,0000" />
          <Ohlc label="C" value="24.439,0000" />
          <span>+3,0000 (+0,01%)</span>
        </p>
      </div>
      <p className="mt-1 flex h-8 items-center gap-3">
        Gap <span className="flex gap-2"><span>Ø</span><span>Ø</span></span>
      </p>
      <p className="mt-1 flex h-8 items-center gap-4 whitespace-nowrap text-[#505050]">
        Croc 3.0 Chart - Professional No Signal No Signal No Signal No Signal No Signal off on
        <EyeOff className="size-6 text-[#c0c0c0]" strokeWidth={1.400} />
      </p>
      <button aria-label="Legende einklappen" className="-ml-1 mt-[7px] flex h-7 w-[42px] items-center justify-center rounded-sm border border-[#3a3a3a]">
        <ChevronUp className="size-5" strokeWidth={1.800} />
      </button>
    </div>
  );
}

function formatPrice(p) {
  return `${String(p).slice(0, 2)}.${String(p).slice(2)},0000`;
}

function PriceAxis() {
  return (
    <div className="relative w-[119px] shrink-0 border-l border-[#26262a] text-[17px] leading-none text-[#aeb0b8]">
      {SCALE.map((p) => (
        <span key={p} className="absolute right-[11px] -translate-y-1/2" style={{ top: top(priceY(p)) }}>
          {formatPrice(p)}
        </span>
      ))}
      <div className="absolute inset-x-0 top-0 bg-black pt-[3px]">
        <label className="mx-1 flex h-[37px] w-[112px] items-center rounded-md border border-[#3a3a3a] bg-[#0f0f0f] pr-1">
          <span className="sr-only">Währung</span>
          <select className="w-full appearance-none bg-transparent pl-1 text-[17px] font-medium text-[#dbdbdb]">
            <option>EUR</option>
            <option>USD</option>
          </select>
          <ChevronDown className="size-4 shrink-0" strokeWidth={2} />
        </label>
        <div className="mt-1.5 h-1 w-[116px] bg-[#5a5a5a]" />
      </div>
      <span
        className="absolute left-0 h-5 w-[116px] bg-[#e89a30]"
        style={{ top: top(1340) }}
      />
      {TAGS.map(([y, text, tone]) => (
        <span
          key={text}
          className={`absolute left-0 flex h-[26px] w-[116px] -translate-y-1/2 items-center justify-end rounded-r-sm pr-2 ${tone}`}
          style={{ top: top(y) }}
        >
          {text}
        </span>
      ))}
      <span
        className="absolute left-0 flex h-[26px] w-[116px] -translate-y-1/2 items-center justify-end rounded-r-sm bg-[#212d60] pr-2 font-semibold text-white"
        style={{ top: top(1341) }}
      >
        24.001,0000
      </span>
      <div className="absolute bottom-1.5 left-7 flex gap-1.5 font-semibold text-[#c8c8c8]">
        <button className="h-8 w-[29px] rounded-md border border-[#3a3a3a]">A</button>
        <button className="h-8 w-[29px] rounded-md border border-[#3a3a3a]">L</button>
      </div>
    </div>
  );
}

function TimeAxis() {
  return (
    <div className="flex h-[38px] shrink-0 border-t border-[#26262a] text-base font-medium text-[#aeb0b8]">
      <div className="relative min-w-0 flex-1">
        {TIMES.map(([x, t]) => (
          <span key={x} className="absolute top-2 -translate-x-1/2 leading-6" style={{ left: left(x) }}>
            {t}
          </span>
        ))}
        <span
          className="absolute top-0 flex h-9 w-[198px] -translate-x-1/2 items-center justify-center gap-4 whitespace-nowrap rounded-b-sm bg-[#3a3b48] font-semibold text-white"
          style={{ left: left(2064) }}
        >
          <span>Do 14-08-2025</span>
          <span>17:42</span>
        </span>
      </div>
      <button aria-label="Skaleneinstellungen" className="flex w-[119px] shrink-0 items-center justify-center border-l border-[#26262a]">
        <svg viewBox="0 0 24 24" className="size-6" fill="none" stroke="#c8c8c8" strokeWidth="1.300">
          <path d="M7 3h10l5 9-5 9H7l-5-9z" />
          <circle cx="12" cy="12" r="3" />
        </svg>
      </button>
    </div>
  );
}

const FAVORITES = [
  "channel", "rect", "info", "trend", "hline", "pin", "arrow", "text", "arrowline", "fan", "fib", "fibtime",
  "measure", "circle", "A C", "W Z", "W Y", "A E",
];

function FavoritesBar() {
  return (
    <div className="absolute bottom-12 left-[21.9%] flex h-14 w-[1092px] items-center rounded-lg bg-[#1f1f1f] text-[#cfcfcf] shadow-lg">
      <span className="grid w-9 shrink-0 grid-cols-[auto_auto] place-content-center gap-1.5">
        {Array.from({ length: 6 }, (_, i) => (
          <span key={i} className="size-[3px] rounded-full bg-[#5c5c5c]" />
        ))}
      </span>
      {FAVORITES.map((name) => (
        <button key={name} aria-label={name} className="flex min-w-0 flex-1 flex-col items-center justify-center">
          {name === "pin" ? (
            <MapPin className="size-9" strokeWidth={1} />
          ) : name.includes(" ") ? (
            <>
              <span className="flex gap-2 text-[13px] font-semibold leading-3">
                {name.split(" ").map((c) => (
                  <span key={c}>{c}</span>
                ))}
              </span>
              <Icon name="zig" className="-mt-1.5 size-9" />
            </>
          ) : (
            <Icon name={name} />
          )}
        </button>
      ))}
      <button aria-label="Fadenkreuz" className="flex min-w-0 flex-1 justify-center text-[#4a5ce0]">
        <Icon name="cross" />
      </button>
    </div>
  );
}

function RangeBar() {
  return (
    <div className="flex h-14 shrink-0 items-center rounded-md bg-[#0f0f0f] text-[19px] font-medium text-[#dbdbdb]">
      <div className="ml-3 flex items-center">
        {RANGES.map((r) => (
          <button key={r} className="px-[9px]">{r}</button>
        ))}
      </div>
      <span className="ml-1.5 flex"><Divider /></span>
      <button aria-label="Gehe zu" className="ml-[18px]"><Icon name="goto" className="size-8" /></button>
      <div className="ml-auto flex items-center">
        <button>12:47:34 UTC+2</button>
        <button className="mx-4">RTH</button>
        <Divider />
        <button className="mx-3">b-adj</button>
        <button aria-label="Vollbild" className="mr-2 flex h-[52px] w-[50px] items-center justify-center rounded-lg bg-[#3d3d3d]">
          <Icon name="corners" className="size-8" />
        </button>
      </div>
    </div>
  );
}

function BottomTabs() {
  return (
    <div className="flex h-[55px] shrink-0 items-center rounded-t-md bg-[#0f0f0f] text-[19px] font-medium text-[#dbdbdb]">
      <nav className="ml-[23px] flex gap-12">
        <a href="#pine">Pine Editor</a>
        <a href="#tester">Strategietester</a>
        <a href="#replay">Handelsfeld für Wiedergabemodus</a>
        <a href="#trading">Trading-Panel</a>
      </nav>
      <div className="ml-auto mr-2.5 flex items-center gap-[18px]">
        <button aria-label="Aufklappen"><ChevronUp className="size-9" strokeWidth={1.200} /></button>
        <button aria-label="Maximieren"><Maximize className="size-8" strokeWidth={1.300} /></button>
      </div>
    </div>
  );
}

export default function App() {
  return (
    <div className="relative flex h-screen flex-col overflow-hidden bg-black pb-0.5 font-['Open_Sans','Noto_Sans',sans-serif]">
      <TabBar />
      <TopToolbar />
      <div className="flex min-h-0 flex-1 bg-[#2e2e2e] pt-1.5">
        <DrawingBar />
        <main id="chart" className="mx-1.5 flex min-w-0 flex-1 flex-col">
          <section className="flex min-h-0 flex-1 flex-col overflow-hidden rounded-md border-[3px] border-[#8c8c8c] bg-black">
            <div className="flex min-h-0 flex-1">
              <Plot />
              <PriceAxis />
            </div>
            <TimeAxis />
          </section>
          <div className="mt-px flex flex-col gap-[5px]">
            <RangeBar />
            <BottomTabs />
          </div>
        </main>
        <WidgetBar />
      </div>
      <FavoritesBar />
    </div>
  );
}
